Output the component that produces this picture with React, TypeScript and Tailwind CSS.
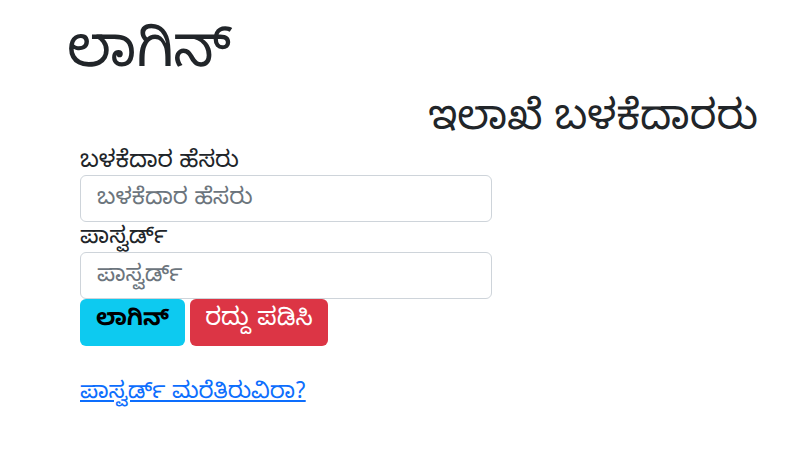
import React from 'react';

export default function App() {
  return (
    <div className="min-h-[457px] w-[792px] bg-white text-[#212529] font-['Noto_Sans_Kannada','Noto_Sans',sans-serif]">
      <h1 className="pl-[67px] pt-[26px] h-[92px] text-[57px] leading-[66px] font-normal">ಲಾಗಿನ್</h1>
      <h2 className="pr-[34px] pt-[5px] h-[54px] text-right text-[41px] leading-[54px] font-normal">ಇಲಾಖೆ ಬಳಕೆದಾರರು</h2>
      <form className="ml-[80px] w-[412px]">
        <label className="block h-[29px] text-[23.5px] leading-[36px]">ಬಳಕೆದಾರ ಹೆಸರು</label>
        <input
          className="block w-full h-[47px] rounded-[6px] border border-[#ced4da] px-[16px] pt-[3px] text-[23px] placeholder:text-[#6c757d] outline-none"
          placeholder="ಬಳಕೆದಾರ ಹೆಸರು"
        />
        <label className="block h-[30px] text-[23.5px] leading-[36px]">ಪಾಸ್ವರ್ಡ್</label>
        <input
          type="text"
          className="block w-full h-[47px] rounded-[6px] border border-[#ced4da] px-[16px] pt-[3px] text-[23px] placeholder:text-[#6c757d] outline-none"
          placeholder="ಪಾಸ್ವರ್ಡ್"
        />
        <div className="flex gap-[5px]">
          <button type="button" className="h-[47px] w-[105px] rounded-[6px] bg-[#0dcaf0] text-black font-bold text-[23px]">
            ಲಾಗಿನ್
          </button>
          <button type="button" className="h-[47px] w-[138px] rounded-[6px] bg-[#dc3545] text-white text-[24.5px]">
            ರದ್ದು ಪಡಿಸಿ
          </button>
        </div>
        <a href="#" className="inline-block mt-[29px] text-[#0d6efd] underline text-[23px] leading-[40px]">
          ಪಾಸ್ವರ್ಡ್ ಮರೆತಿರುವಿರಾ?
        </a>
      </form>
    </div>
  );
}
